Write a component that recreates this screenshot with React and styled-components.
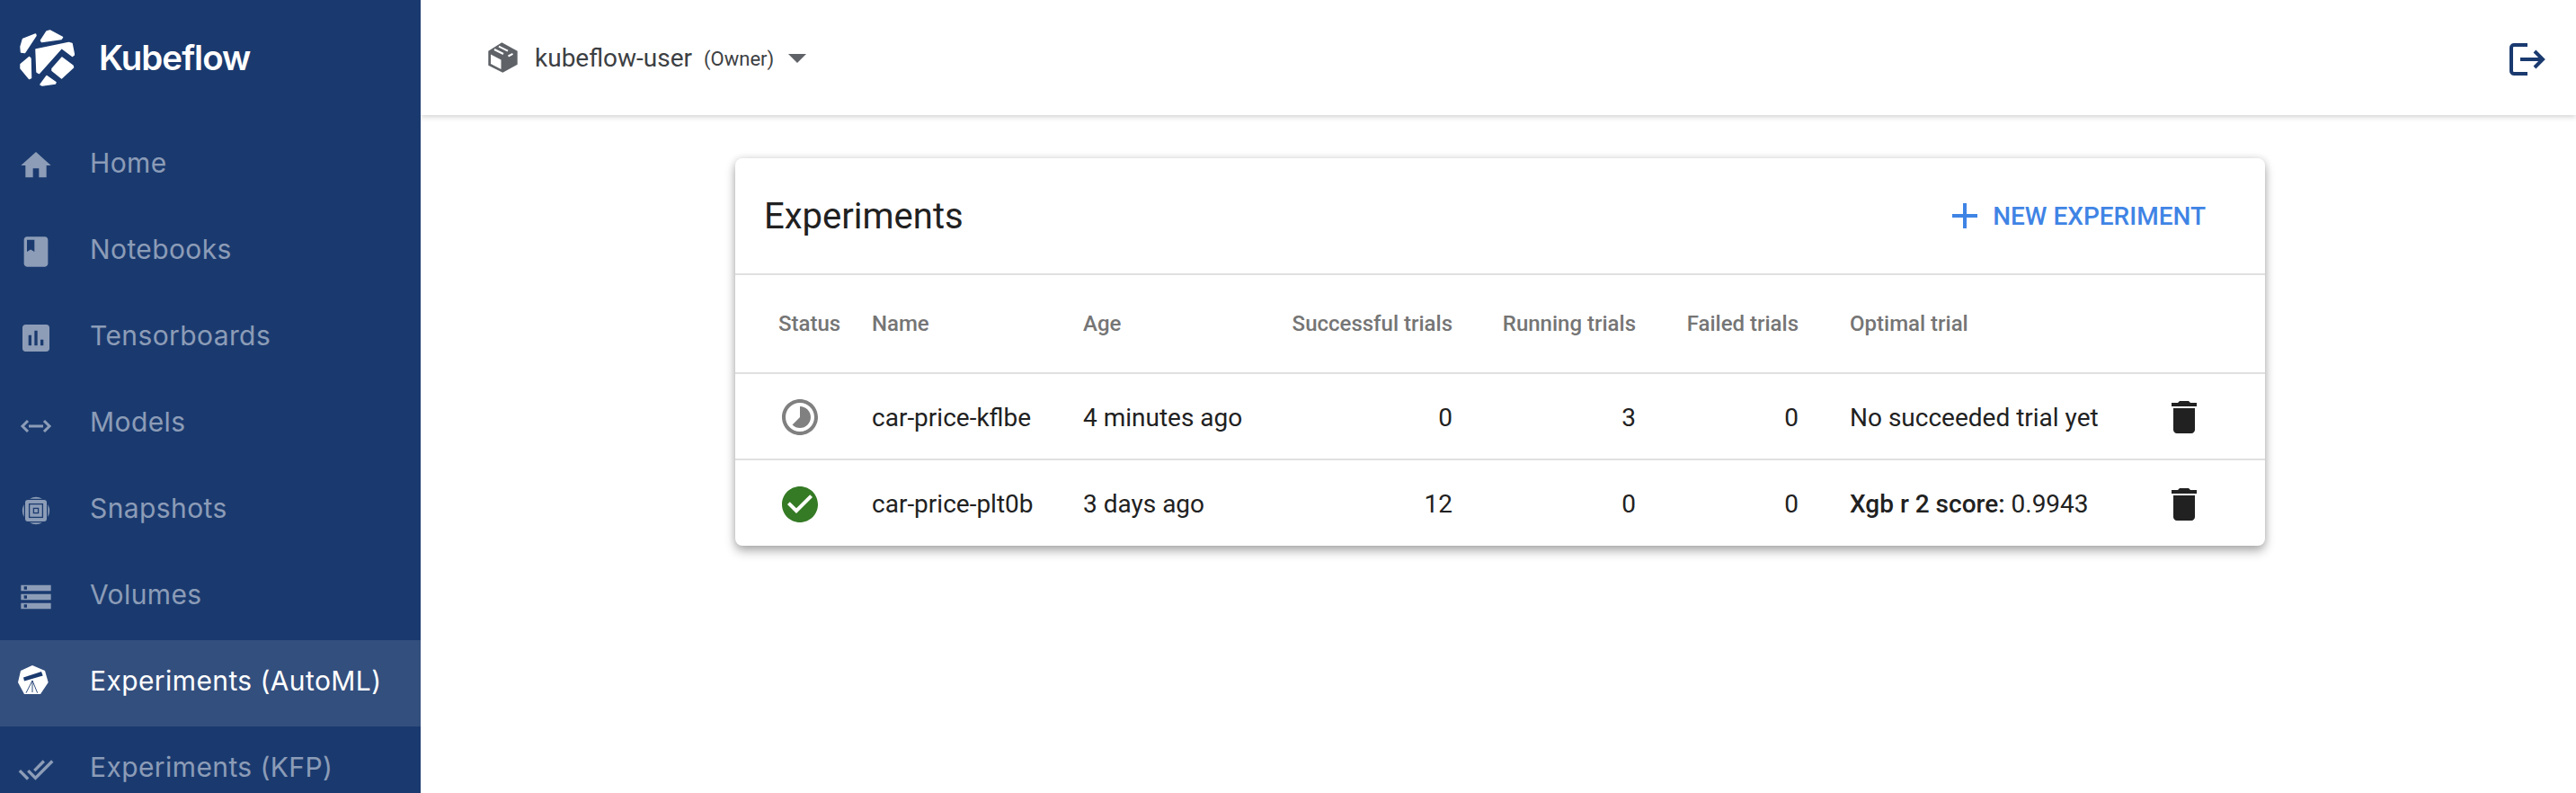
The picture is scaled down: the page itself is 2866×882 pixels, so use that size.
import React from "react";
import styled, { createGlobalStyle } from "styled-components";

const GlobalStyle = createGlobalStyle`
  html, body {
    margin: 0;
    padding: 0;
    height: 100%;
    overflow: hidden;
    background: #fff;
    font-family: Roboto, "Liberation Sans", sans-serif;
  }
  * { box-sizing: border-box; }
`;

const Page = styled.div`
  display: flex;
  height: 882px;
  overflow: hidden;
`;

const Sidebar = styled.aside`
  flex: 0 0 468px;
  background: #1a3a6f;
  overflow: hidden;
  position: relative;
  z-index: 2;
`;

const Brand = styled.div`
  height: 136px;
  display: flex;
  align-items: center;
  padding: 0 0 8px 22px;
  gap: 27px;
  color: #fff;
  font-family: Inter, sans-serif;
  font-size: 38.5px;
  font-weight: 600;
  letter-spacing: -1px;
`;

const LogoMark = styled.svg`
  flex: none;
  width: 61px;
  height: 63px;
`;

const NavItem = styled.a`
  display: flex;
  align-items: center;
  height: 96px;
  padding-left: 20px;
  gap: 40px;
  font-family: Inter, sans-serif;
  font-size: 30px;
  letter-spacing: 0.4px;
  color: ${(p) => (p.$active ? "#fff" : "rgba(255,255,255,.5)")};
  background: ${(p) => (p.$active ? "rgba(255,255,255,.11)" : "transparent")};
`;

const NavLabel = styled.span`
  margin-bottom: 6px;
`;

const NavIcon = styled.svg`
  width: 40px;
  height: 40px;
  flex: none;
  fill: currentColor;
`;

const Main = styled.main`
  flex: 1;
  min-width: 0;
`;

const TopBar = styled.header`
  height: 128px;
  display: flex;
  align-items: center;
  justify-content: space-between;
  padding: 0 34px 0 72px;
  box-shadow: 0 2px 6px rgba(0, 0, 0, 0.18);
`;

const Namespace = styled.div`
  display: flex;
  align-items: center;
  color: #3c4043;
  font-size: 28px;
`;

const CubeIcon = styled.svg`
  width: 40px;
  height: 40px;
  margin-right: 15px;
`;

const Owner = styled.span`
  font-size: 22px;
  margin-left: 13px;
  margin-top: 2px;
`;

const Caret = styled.span`
  width: 0;
  height: 0;
  margin: 2px 0 0 16px;
  border-left: 10px solid transparent;
  border-right: 10px solid transparent;
  border-top: 10px solid #5f6368;
`;

const LogoutIcon = styled.svg`
  width: 40px;
  height: 36px;
  margin-top: 3px;
  fill: none;
  stroke: #1a3a6f;
  stroke-width: 4;
`;

const Content = styled.div`
  padding: 48px 0 0 350px;
`;

const Card = styled.section`
  width: 1702px;
  background: #fff;
  border-radius: 8px;
  box-shadow: 0 6px 12px rgba(0, 0, 0, 0.3), 0 0 8px rgba(0, 0, 0, 0.12);
`;

const CardHeader = styled.div`
  height: 130px;
  display: flex;
  align-items: center;
  justify-content: space-between;
  padding: 0 66px 0 32px;
  border-bottom: 2px solid #e0e0e0;
`;

const Title = styled.h1`
  margin: 0;
  font-size: 40px;
  font-weight: 400;
  color: #212121;
`;

const NewButton = styled.button`
  display: flex;
  align-items: center;
  gap: 7px;
  padding: 0;
  border: 0;
  background: none;
  color: #3f84e5;
  font-family: inherit;
  font-size: 28px;
  font-weight: 500;
`;

const Row = styled.div`
  display: grid;
  grid-template-columns: 104px 235px 195px 216px 204px 181px 57px 348px 60px;
  align-items: center;
  height: ${(p) => p.$height}px;
  padding: ${(p) => (p.$head ? "0" : "2px")} 0 0 48px;
  color: ${(p) => (p.$head ? "#757575" : "#212121")};
  font-size: ${(p) => (p.$head ? 24 : 28)}px;
  font-weight: ${(p) => (p.$head ? 500 : 400)};
  border-bottom: ${(p) => (p.$last ? "0" : "2px solid #e0e0e0")};
`;

const Cell = styled.div`
  white-space: nowrap;
  text-align: ${(p) => (p.$right ? "right" : "left")};
  grid-column: ${(p) => p.$col || "auto"};
`;

const Metric = styled.b`
  font-weight: 500;
`;

const StatusIcon = styled.svg`
  display: block;
  width: 48px;
  height: 48px;
  fill: ${(p) => p.$color};
`;

const TrashIcon = styled.svg`
  display: block;
  width: 48px;
  height: 48px;
  fill: #212121;
`;

const PlusIcon = styled.svg`
  width: 48px;
  height: 48px;
  fill: currentColor;
`;

const Logo = () => (
  <LogoMark viewBox="22 33 61 63">
    <g fill="#fff" stroke="#fff" strokeWidth="1.5" strokeLinejoin="round">
      <polygon points="39.5,38 40,39.5 27.5,58.5 23.5,58 23,52 25.5,43.5" />
      <polygon points="55.5,34 69.5,41.5 68,43.5 46.5,46.5 45.5,45 52,35" />
      <polygon points="40,55 76.5,47.5 80,48.5 82.5,61 80.5,62.5 68.5,53.5 43.5,81.5 41,80" />
      <polygon points="69,64 81,73 81.5,75 68.5,87 58,78.5 58,76.5" />
      <polygon points="32.5,63.5 34,65 34.5,86.5 32.5,87.5 23,76 23,71.5" />
      <polygon points="52,84.5 62,91.5 61.5,93 47,95 45,94" />
    </g>
  </LogoMark>
);

const icons = {
  home: "M10 20v-6h4v6h5v-8h3L12 3 2 12h3v8z",
  book: "M18 2H6c-1.1 0-2 .9-2 2v16c0 1.1.9 2 2 2h12c1.1 0 2-.9 2-2V4c0-1.1-.9-2-2-2zM6 4h5v8l-2.5-1.5L6 12V4z",
  chart: "M19 3H5c-1.1 0-2 .9-2 2v14c0 1.1.9 2 2 2h14c1.1 0 2-.9 2-2V5c0-1.1-.9-2-2-2zM9 17H7v-7h2v7zm4 0h-2V7h2v10zm4 0h-2v-4h2v4z",
  storage: "M2 20h20v-4H2v4zm2-3h2v2H4v-2zM2 4v4h20V4H2zm4 3H4V5h2v2zm-4 7h20v-4H2v4zm2-3h2v2H4v-2z",
  doneAll: "M18 7l-1.41-1.41-6.34 6.34 1.41 1.41L18 7zm4.24-1.41L11.66 16.17 7.48 12l-1.41 1.41L11.66 19l12-12-1.42-1.41zM.41 13.41L6 19l1.41-1.41L1.83 12 .41 13.41z",
};

const ModelsGlyph = () => (
  <NavIcon viewBox="0 0 40 40">
    <path fill="none" stroke="currentColor" strokeWidth="3" d="M11 16l-6 6 6 6M29 16l6 6-6 6M12 22h16" />
  </NavIcon>
);

const Snapshot = () => (
  <NavIcon viewBox="0 0 40 40">
    <rect x="8" y="8" width="24" height="24" rx="3" />
    <g fill="none" stroke="#1a3a6f" strokeWidth="1.3">
      <rect x="12.6" y="12.6" width="14.8" height="14.8" />
      <rect x="17.4" y="17.4" width="5.2" height="5.2" />
    </g>
    <path d="M13 6.7A15 15 0 0 1 27 6.7zM13 33.3A15 15 0 0 0 27 33.3zM6.7 13A15 15 0 0 0 6.7 27zM33.3 13A15 15 0 0 1 33.3 27z" />
  </NavIcon>
);

const Telescope = () => (
  <NavIcon viewBox="0 0 40 40">
    <polygon fill="#fff" points="16,0 30,6 33.7,19 25,32 7,32 0,19 3,6" />
    <polygon fill="#1a3a6f" points="6,13.5 26,7 27.7,11.5 7,17.5" />
    <path stroke="#1a3a6f" strokeWidth="0.9" fill="none" d="M16 17L9 30.7M16 17v13M16 17l5.7 13.7" />
  </NavIcon>
);

const navItems = [
  { label: "Home", path: icons.home },
  { label: "Notebooks", path: icons.book },
  { label: "Tensorboards", path: icons.chart },
  { label: "Models", custom: <ModelsGlyph /> },
  { label: "Snapshots", custom: <Snapshot /> },
  { label: "Volumes", path: icons.storage },
  { label: "Experiments (AutoML)", custom: <Telescope />, active: true },
  { label: "Experiments (KFP)", path: icons.doneAll },
];

const trashPath = "M6 19c0 1.1.9 2 2 2h8c1.1 0 2-.9 2-2V7H6v12zM19 4h-3.5l-1-1h-5l-1 1H5v2h14V4z";
const runningPath = "M16.24 7.76C15.07 6.59 13.54 6 12 6v6l-4.24 4.24c2.34 2.34 6.14 2.34 8.49 0 2.34-2.34 2.34-6.14-.01-8.48zM12 2C6.48 2 2 6.48 2 12s4.48 10 10 10 10-4.48 10-10S17.52 2 12 2zm0 18c-4.42 0-8-3.58-8-8s3.58-8 8-8 8 3.58 8 8-3.58 8-8 8z";
const donePath = "M12 2C6.48 2 2 6.48 2 12s4.48 10 10 10 10-4.48 10-10S17.52 2 12 2zm-2 15l-5-5 1.41-1.41L10 14.17l7.59-7.59L19 8l-9 9z";

const App = () => {
  return (
    <Page>
      <GlobalStyle />
      <Sidebar>
        <Brand>
          <Logo />
          Kubeflow
        </Brand>
        {navItems.map((item) => (
          <NavItem key={item.label} $active={item.active}>
            {item.custom || (
              <NavIcon viewBox="0 0 24 24">
                <path d={item.path} />
              </NavIcon>
            )}
            <NavLabel>{item.label}</NavLabel>
          </NavItem>
        ))}
      </Sidebar>
      <Main>
        <TopBar>
          <Namespace>
            <CubeIcon viewBox="0 0 40 40">
              <polygon fill="#5f6368" points="18.3,3.3 3.3,12.7 3.3,28.7 19.3,36.7 35.7,27.7 35.7,12.7" />
              <polygon fill="#fff" points="6,16.5 17.5,22.5 17.5,33 6,27" />
              <path fill="none" stroke="#fff" strokeWidth="2" d="M10 11l10 5M15 7.7l10 5M25.5 18.5l5-2.7" />
            </CubeIcon>
            kubeflow-user
            <Owner>(Owner)</Owner>
            <Caret />
          </Namespace>
          <LogoutIcon viewBox="0 0 40 36">
            <path d="M20 2H5a3 3 0 0 0-3 3v26a3 3 0 0 0 3 3h15" />
            <path d="M12 18h25M28 9l9 9-9 9" />
          </LogoutIcon>
        </TopBar>
        <Content>
          <Card>
            <CardHeader>
              <Title>Experiments</Title>
              <NewButton>
                <PlusIcon viewBox="0 0 24 24">
                  <path d="M19 13h-6v6h-2v-6H5v-2h6V5h2v6h6v2z" />
                </PlusIcon>
                NEW EXPERIMENT
              </NewButton>
            </CardHeader>
            <Row $head $height={110}>
              <Cell>Status</Cell>
              <Cell>Name</Cell>
              <Cell>Age</Cell>
              <Cell $right>Successful trials</Cell>
              <Cell $right>Running trials</Cell>
              <Cell $right>Failed trials</Cell>
              <Cell $col="8">Optimal trial</Cell>
            </Row>
            <Row $height={96}>
              <Cell>
                <StatusIcon viewBox="0 0 24 24" $color="#808080">
                  <path d={runningPath} />
                </StatusIcon>
              </Cell>
              <Cell>car-price-kflbe</Cell>
              <Cell>4 minutes ago</Cell>
              <Cell $right>0</Cell>
              <Cell $right>3</Cell>
              <Cell $right>0</Cell>
              <Cell $col="8">No succeeded trial yet</Cell>
              <Cell>
                <TrashIcon viewBox="0 0 24 24">
                  <path d={trashPath} />
                </TrashIcon>
              </Cell>
            </Row>
            <Row $height={95} $last>
              <Cell>
                <StatusIcon viewBox="0 0 24 24" $color="#357a25">
                  <path d={donePath} />
                </StatusIcon>
              </Cell>
              <Cell>car-price-plt0b</Cell>
              <Cell>3 days ago</Cell>
              <Cell $right>12</Cell>
              <Cell $right>0</Cell>
              <Cell $right>0</Cell>
              <Cell $col="8">
                <Metric>Xgb r 2 score:</Metric> 0.9943
              </Cell>
              <Cell>
                <TrashIcon viewBox="0 0 24 24">
                  <path d={trashPath} />
                </TrashIcon>
              </Cell>
            </Row>
          </Card>
        </Content>
      </Main>
    </Page>
  );
};

export default App;
